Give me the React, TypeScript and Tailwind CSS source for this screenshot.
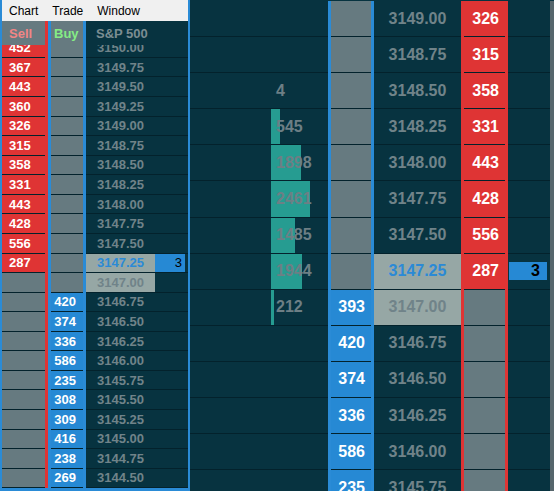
import React from "react";

// Depth ladder: a compact DOM window on the left, an enlarged ladder with a
// volume profile on the right.

type LevelRow = { price: string; sell?: number; buy?: number };
type LadderRow = LevelRow & { vol?: number };

const tick = (start: number, i: number) => (start - i * 0.25).toFixed(2);

const SMALL_SELL: Record<string, number> = {
  "3150.00": 452,
  "3149.75": 367,
  "3149.50": 443,
  "3149.25": 360,
  "3149.00": 326,
  "3148.75": 315,
  "3148.50": 358,
  "3148.25": 331,
  "3148.00": 443,
  "3147.75": 428,
  "3147.50": 556,
  "3147.25": 287,
};

const SMALL_BUY: Record<string, number> = {
  "3146.75": 420,
  "3146.50": 374,
  "3146.25": 336,
  "3146.00": 586,
  "3145.75": 235,
  "3145.50": 308,
  "3145.25": 309,
  "3145.00": 416,
  "3144.75": 238,
  "3144.50": 269,
};

const SMALL_ROWS: LevelRow[] = Array.from({ length: 23 }, (_, i) => {
  const price = tick(3150, i);
  return { price, sell: SMALL_SELL[price], buy: SMALL_BUY[price] };
});

const BIG_BUY: Record<string, number> = {
  "3147.00": 393,
  "3146.75": 420,
  "3146.50": 374,
  "3146.25": 336,
  "3146.00": 586,
  "3145.75": 235,
};

const BIG_VOL: Record<string, number> = {
  "3148.50": 4,
  "3148.25": 545,
  "3148.00": 1898,
  "3147.75": 2461,
  "3147.50": 1485,
  "3147.25": 1944,
  "3147.00": 212,
};

const BIG_ROWS: LadderRow[] = Array.from({ length: 14 }, (_, i) => {
  const price = tick(3149, i);
  return { price, sell: SMALL_SELL[price], buy: BIG_BUY[price], vol: BIG_VOL[price] };
});

const LAST = "3147.25";
const BID = "3147.00";
const MAX_VOL = 2461;
const MAX_BAR = 39;

function MenuBar() {
  return (
    <div className="flex h-[21px] shrink-0 items-center bg-[#f0f0f0] text-[12px] text-black">
      {["Chart", "Trade", "Window"].map((m) => (
        <span key={m} className="px-[7px] leading-none">
          {m}
        </span>
      ))}
    </div>
  );
}

function SmallHeader() {
  return (
    <div className="flex h-[24px] shrink-0 text-[13px] font-bold leading-none">
      <div className="flex w-[46px] items-center border-r-[3px] border-[#df3434] bg-[#667a80] pl-[7px] text-[#f28585]">
        Sell
      </div>
      <div className="flex w-[38px] items-center border-x-[3px] border-[#2a8bd6] bg-[#667a80] pl-[3px] text-[#85ec85]">
        Buy
      </div>
      <div className="flex flex-1 items-center pl-[10px] text-[#7b8d92]">S&amp;P 500</div>
    </div>
  );
}

function SmallRow({ row }: { row: LevelRow }) {
  const shaded = row.price === LAST || row.price === BID;
  return (
    <div className="flex h-[19.57px] shrink-0 text-[13px] font-bold leading-none">
      <div className="w-[46px] border-r-[3px] border-[#df3434]">
        <div
          className={`flex h-full items-center border-b border-[#03222c] pl-[7px] text-white ${
            row.sell ? "bg-[#df3434]" : "bg-[#667a80]"
          }`}
        >
          {row.sell}
        </div>
      </div>
      <div className="w-[38px] border-x-[3px] border-[#2a8bd6]">
        <div
          className={`flex h-full items-center justify-end border-b border-[#03222c] pr-[7px] text-white ${
            row.buy ? "bg-[#2689d4]" : "bg-[#667a80]"
          }`}
        >
          {row.buy}
        </div>
      </div>
      <div
        className={`flex w-[69px] items-center justify-center border-b border-[#03222c] ${
          shaded ? "bg-[#96a7a5]" : ""
        } ${row.price === LAST ? "text-[#2b8ad6]" : "text-[#708389]"}`}
      >
        {row.price}
      </div>
      <div className="flex flex-1 border-b border-[#03222c]">
        {row.price === LAST && (
          <div className="flex w-[30px] items-center justify-end bg-[#2689d4] pr-[3px] font-normal text-black">
            3
          </div>
        )}
      </div>
    </div>
  );
}

function SmallDom() {
  return (
    <div className="flex h-full w-[190px] shrink-0 flex-col border-x-2 border-b-[3px] border-[#2a8bd6]">
      <MenuBar />
      <SmallHeader />
      <div className="flex-1 overflow-hidden">
        <div className="-mt-[6.7px] flex flex-col">
          {SMALL_ROWS.map((r) => (
            <SmallRow key={r.price} row={r} />
          ))}
        </div>
      </div>
    </div>
  );
}

function LadderRowView({ row }: { row: LadderRow }) {
  const shaded = row.price === LAST || row.price === BID;
  const bar = row.vol ? Math.round((row.vol / MAX_VOL) * MAX_BAR) : 0;
  return (
    <div className="flex h-[36.1px] shrink-0 text-[16px] font-bold leading-none">
      {/* volume profile */}
      <div className="relative flex w-[138px] items-center border-b border-[#03222c] pl-[86px] text-[#6d7f85]">
        {bar > 0 && (
          <div className="absolute inset-y-0 left-[81px] bg-[#269c91]" style={{ width: bar }} />
        )}
        {row.vol !== undefined && <span className="relative">{row.vol}</span>}
      </div>
      <div className="w-[46px] border-x-[3px] border-[#2a8bd6]">
        <div
          className={`flex h-full items-center justify-end border-b border-[#03222c] pr-[6px] text-white ${
            row.buy ? "bg-[#2689d4]" : "bg-[#667a80]"
          }`}
        >
          {row.buy}
        </div>
      </div>
      <div
        className={`flex w-[87px] items-center justify-center border-b border-[#03222c] ${
          shaded ? "bg-[#96a7a5]" : ""
        } ${row.price === LAST ? "text-[#2b8ad6]" : "text-[#708389]"}`}
      >
        {row.price}
      </div>
      <div className="w-[47px] border-x-[3px] border-[#df3434]">
        <div
          className={`flex h-full items-center justify-end border-b border-[#03222c] pr-[6px] text-white ${
            row.sell ? "bg-[#df3434]" : "bg-[#667a80]"
          }`}
        >
          {row.sell}
        </div>
      </div>
      <div className="flex w-[42px] items-center border-b border-[#03222c] pl-px">
        {row.price === LAST && (
          <div className="flex h-[18px] w-[38px] items-center justify-end bg-[#2689d4] pr-[7px] text-black">
            3
          </div>
        )}
      </div>
      <div className="w-[4px] bg-[#56666c]" />
    </div>
  );
}

function Ladder() {
  return (
    <div className="flex h-full flex-1 flex-col overflow-hidden pt-px">
      {BIG_ROWS.map((r) => (
        <LadderRowView key={r.price} row={r} />
      ))}
    </div>
  );
}

export default function App() {
  return (
    <div className="flex h-[491px] w-[554px] overflow-hidden bg-[#073340] font-['Liberation_Sans',Arial,sans-serif]">
      <SmallDom />
      <Ladder />
    </div>
  );
}
